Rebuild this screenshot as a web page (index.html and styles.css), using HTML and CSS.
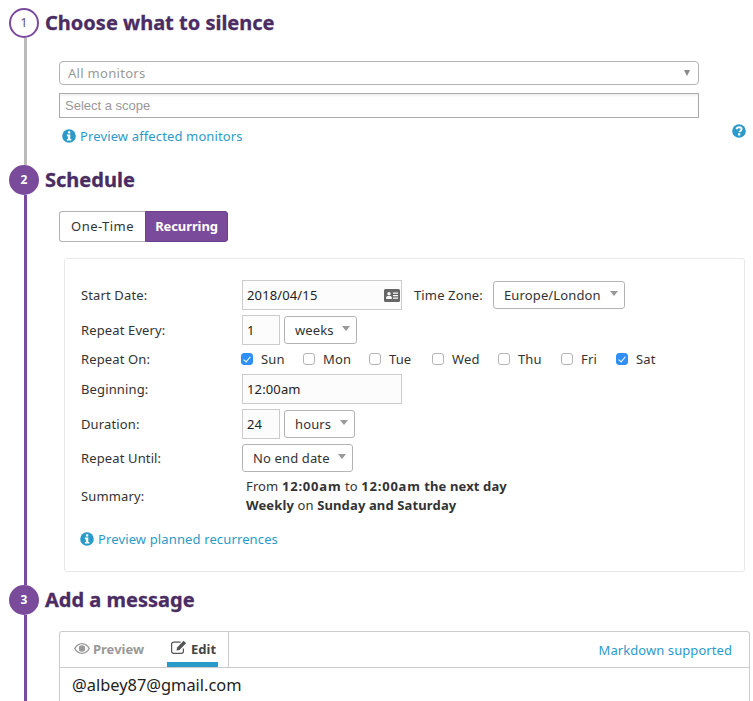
FILE: index.html
```html
<!DOCTYPE html>
<html lang="en">

<head>
    <meta charset="UTF-8">
    <title>Manage Downtime</title>
    <link rel="stylesheet" href="styles.css">
</head>

<body>
    <div class="page">
        <svg width="0" height="0" class="defs">
            <symbol id="i-info" viewBox="0 0 14 14">
                <circle cx="7" cy="7" r="6.8" fill="currentColor"/>
                <rect x="5.9" y="2.3" width="2.4" height="2.2" rx=".4" fill="#fff"/>
                <path d="M4.9 5.6h3.4v4.3h1v1.6H4.9V9.9h1V7.2h-1z" fill="#fff"/>
            </symbol>
            <symbol id="i-help" viewBox="0 0 14 14">
                <circle cx="7" cy="7" r="6.8" fill="currentColor"/>
                <path d="M4.5 5.300C4.800 3.900 5.800 3.200 7.100 3.200c1.400 0 2.500.9 2.500 2.100 0 1.700-2.100 1.800-2.100 3" fill="none" stroke="#fff" stroke-width="1.900"/>
                <rect x="6" y="9.300" width="2.300" height="2.100" rx=".3" fill="#fff"/>
            </symbol>
        </svg>

        <section class="step">
            <div class="rail">
                <span class="dot dot-open">1</span>
                <span class="line line-grey"></span>
            </div>
            <div class="body body-1">
                <h2>Choose what to silence</h2>
                <div class="fields">
                    <div class="monitor-select">All monitors<span class="tiny-arrow"></span></div>
                    <div class="scope-input">Select a scope</div>
                </div>
                <div class="link-row">
                    <a href="#" class="link"><svg class="ico"><use href="#i-info"/></svg>Preview affected monitors</a>
                    <svg class="ico help"><use href="#i-help"/></svg>
                </div>
            </div>
        </section>

        <section class="step">
            <div class="rail">
                <span class="dot">2</span>
                <span class="line"></span>
            </div>
            <div class="body body-2">
                <h2>Schedule</h2>
                <div class="switch">
                    <span class="switch-off">One-Time</span>
                    <span class="switch-on">Recurring</span>
                </div>
                <div class="card">
                    <div class="row">
                        <label>Start Date:</label>
                        <div class="input wide">2018/04/15
                            <svg class="card-ico" viewBox="0 0 16 13"><path fill-rule="evenodd" fill="#666" d="M1.5 0h13A1.5 1.5 0 0 1 16 1.500v10a1.500 1.500 0 0 1-1.500 1.500h-13A1.500 1.500 0 0 1 0 11.500v-10A1.500 1.500 0 0 1 1.500 0zM5 3a1.700 1.700 0 1 0 0 3.400A1.700 1.700 0 0 0 5 3zM2.200 10h5.600V8.600C7.800 7.600 7 7 6 7H4c-1 0-1.800.6-1.800 1.600zM9 3.500v1.300h5V3.500zM9 6v1.300h5V6zM9 8.500v1.300h5V8.500z"/></svg>
                        </div>
                        <span class="tz-label">Time Zone:</span>
                        <div class="select tz">Europe/London</div>
                    </div>
                    <div class="row">
                        <label>Repeat Every:</label>
                        <div class="input small">1</div>
                        <div class="select weeks">weeks</div>
                    </div>
                    <div class="row row-days">
                        <label>Repeat On:</label>
                        <div class="days">
                            <span class="day d-sun"><input type="checkbox" checked>Sun</span>
                            <span class="day d-mon"><input type="checkbox">Mon</span>
                            <span class="day d-tue"><input type="checkbox">Tue</span>
                            <span class="day d-wed"><input type="checkbox">Wed</span>
                            <span class="day d-thu"><input type="checkbox">Thu</span>
                            <span class="day d-fri"><input type="checkbox">Fri</span>
                            <span class="day"><input type="checkbox" checked>Sat</span>
                        </div>
                    </div>
                    <div class="row">
                        <label>Beginning:</label>
                        <div class="input wide">12:00am</div>
                    </div>
                    <div class="row">
                        <label>Duration:</label>
                        <div class="input small">24</div>
                        <div class="select hours">hours</div>
                    </div>
                    <div class="row">
                        <label>Repeat Until:</label>
                        <div class="select until">No end date</div>
                    </div>
                    <div class="row">
                        <label>Summary:</label>
                        <div class="summary">
                            From <b class="time">12:00am</b> to <b><span class="time">12:00am</span> the next day</b><br>
                            <b>Weekly</b> on <b>Sunday and Saturday</b>
                        </div>
                    </div>
                    <a href="#" class="link card-link"><svg class="ico"><use href="#i-info"/></svg>Preview planned recurrences</a>
                </div>
            </div>
        </section>

        <section class="step step-last">
            <div class="rail">
                <span class="dot">3</span>
                <span class="line"></span>
            </div>
            <div class="body body-3">
                <h2>Add a message</h2>
                <div class="editor">
                    <div class="tabs">
                        <span class="tab">
                            <svg class="tab-ico" viewBox="0 0 16 11"><path fill-rule="evenodd" fill="#999" d="M8 0c3.400 0 6.300 2.100 8 5.500C14.300 8.900 11.400 11 8 11S1.700 8.900 0 5.500C1.700 2.100 4.600 0 8 0zm0 1.200c-2.700 0-5 1.700-6.500 4.300C3 8.100 5.300 9.800 8 9.800s5-1.700 6.500-4.300C13 2.900 10.700 1.200 8 1.200zM8 2.300a3.200 3.200 0 1 1 0 6.400 3.200 3.200 0 0 1 0-6.400z"/></svg>Preview
                        </span>
                        <span class="tab tab-active">
                            <svg class="tab-ico edit-ico" viewBox="0 0 16 14"><path fill="none" stroke="#555" stroke-width="1.200" d="M12.400 8.500v2.800a2 2 0 0 1-2 2H2.600a2 2 0 0 1-2-2V4.200a2 2 0 0 1 2-2h7"/><path fill="#555" d="M5.500 10.500l.6-3L12.600.8l2.500 2.500-6.600 6.600z"/></svg>Edit
                        </span>
                        <span class="tabs-fill"><a href="#">Markdown supported</a></span>
                    </div>
                    <div class="message">@albey87@gmail.com</div>
                </div>
            </div>
        </section>
    </div>
</body>

</html>
```

FILE: styles.css
```css
*{
    margin: 0;
    padding: 0;
    box-sizing: border-box;
}
html,body{
    height: 701px;
    overflow: hidden;
}
body{
    background: #fff;
    color: #333;
    font-family: "Noto Sans", "Open Sans", sans-serif;
    font-size: 13px;
    letter-spacing: .13px;
}
a{
    text-decoration: none;
    color: #2a9bc9;
}
.defs{
    display: block;
    height: 0;
}
.page{
    height: 701px;
    padding: 8px 0 0 9px;
    display: flex;
    flex-direction: column;
}
.step{
    display: flex;
}
.step-last{
    flex: 1;
}
.rail{
    width: 30px;
    display: flex;
    flex-direction: column;
    flex-shrink: 0;
}
.dot{
    width: 30px;
    height: 30px;
    border-radius: 50%;
    background: #7b4b9b;
    border: 2px solid #7b4b9b;
    color: #fff;
    font-weight: bold;
    font-size: 12px;
    line-height: 26px;
    text-align: center;
}
.dot-open{
    background: #fff;
    color: #5b4a6b;
    font-weight: normal;
}
.line{
    flex: 1;
    width: 3px;
    margin-left: 15px;
    background: #7b4b9b;
}
.line-grey{
    background: #bbb;
}
.body{
    margin-left: 6px;
    flex: 1;
}
.body-1{
    height: 157px;
}
.body-2{
    height: 420px;
}
h2{
    font-size: 20px;
    line-height: 29px;
    padding-bottom: 1px;
    font-weight: bold;
    letter-spacing: 0;
    color: #4a2c63;
    -webkit-text-stroke: .3px #4a2c63;
}

/* step 1 */
.fields{
    margin: 23px 0 0 14px;
    width: 640px;
    display: flex;
    flex-direction: column;
    gap: 8px;
}
.monitor-select{
    height: 24px;
    line-height: 22px;
    padding-left: 8px;
    border: 1px solid #b4b4b4;
    border-radius: 4px;
    color: #999;
    letter-spacing: .3px;
    display: flex;
    justify-content: space-between;
    align-items: center;
}
.tiny-arrow{
    width: 0;
    height: 0;
    margin-right: 8px;
    border-left: 3px solid transparent;
    border-right: 3px solid transparent;
    border-top: 6px solid #888;
}
.scope-input{
    height: 25px;
    line-height: 23px;
    padding-left: 5px;
    border: 1px solid #aaa;
    box-shadow: inset 0 2px 2px #f2f2f2;
    font-family: "Liberation Sans", sans-serif;
    font-size: 13px;
    letter-spacing: 0;
    color: #999;
}
.link-row{
    margin: 9px 7px 0 14px;
    display: flex;
    justify-content: space-between;
}
.link{
    display: flex;
    align-items: center;
    line-height: 18px;
    padding-left: 3px;
}
.ico{
    width: 14px;
    height: 14px;
    margin-right: 4px;
    color: #2a9bc9;
}
.help{
    margin: -3px 0 0 0;
}

/* step 2 */
.switch{
    display: flex;
    margin: 16px 0 0 14px;
    height: 31px;
    line-height: 29px;
}
.switch-off{
    width: 86px;
    text-align: center;
    letter-spacing: .45px;
    border: 1px solid #b4b4b4;
    border-right: 0;
    border-radius: 3px 0 0 3px;
}
.switch-on{
    width: 83px;
    text-align: center;
    letter-spacing: -.1px;
    background: #7b4b9b;
    border: 1px solid #6c3f8b;
    border-radius: 0 3px 3px 0;
    color: #fff;
    font-weight: bold;
}
.card{
    margin: 16px 0 0 19px;
    width: 681px;
    height: 314px;
    padding: 21px 0 0 15px;
    border: 1px solid #e8e8e8;
    border-radius: 3px;
    display: flex;
    flex-direction: column;
    gap: 5px;
}
.row{
    display: flex;
    align-items: center;
}
.row label{
    width: 162px;
    flex-shrink: 0;
    padding-left: 1px;
}
.input{
    height: 30px;
    line-height: 28px;
    padding-left: 4px;
    border: 1px solid #ccc;
    background: #fcfcfc;
    color: #222;
}
.wide{
    width: 160px;
    display: flex;
    justify-content: space-between;
    align-items: center;
    padding-right: 1px;
}
.small{
    width: 38px;
}
.card-ico{
    width: 16px;
    height: 13px;
}
.select{
    height: 28px;
    line-height: 26px;
    padding-left: 10px;
    margin-left: 4px;
    border: 1px solid #b4b4b4;
    border-radius: 3px;
    background: #fff;
    display: flex;
    align-items: center;
    justify-content: space-between;
}
.select::after{
    content: "";
    width: 0;
    height: 0;
    margin: -3px 6px 0 0;
    border-left: 4px solid transparent;
    border-right: 4px solid transparent;
    border-top: 5px solid #999;
}
.tz-label{
    margin-left: 12px;
    width: 75px;
}
.tz{
    width: 132px;
}
.weeks{
    width: 73px;
}
.hours{
    width: 71px;
}
.until{
    width: 111px;
    margin-left: 0;
}
.row-days{
    height: 19px;
    padding-bottom: 2px;
}
.days{
    display: flex;
    margin-left: -1px;
}
.day{
    display: flex;
    align-items: center;
}
.d-sun{ width: 62px; }
.d-mon{ width: 66px; }
.d-tue{ width: 63px; }
.d-wed{ width: 66px; }
.d-thu{ width: 63px; }
.d-fri{ width: 55px; }
.day input{
    appearance: none;
    width: 12px;
    height: 12px;
    margin-right: 8px;
    border: 1px solid #b5b5b5;
    border-radius: 3px;
    background: #fff;
    position: relative;
}
.day input:checked{
    background: #2f8ff5;
    border-color: #2f8ff5;
}
.day input:checked::after{
    content: "";
    position: absolute;
    left: 3px;
    top: 1px;
    width: 3px;
    height: 6px;
    border: solid #fff;
    border-width: 0 1.5px 1.5px 0;
    transform: rotate(40deg);
}
.summary{
    padding-left: 4px;
    line-height: 19px;
}
.time{
    letter-spacing: .8px;
}
.card-link{
    margin-top: 10px;
    padding-left: 0;
}

/* step 3 */
.editor{
    margin: 16px 3px 0 14px;
    border: 1px solid #ccc;
    border-bottom: 0;
    border-radius: 3px 3px 0 0;
    height: 70px;
}
.tabs{
    display: flex;
    height: 36px;
    border-bottom: 1px solid #ccc;
    font-weight: bold;
    letter-spacing: 0;
    color: #999;
}
.tab{
    display: flex;
    align-items: center;
    padding: 0 0 2px 14px;
    width: 93px;
    height: 35px;
}
.tab-ico{
    width: 16px;
    height: 11px;
    margin-right: 3px;
}
.edit-ico{
    height: 14px;
    margin-top: -3px;
    margin-right: 4px;
}
.tab-active{
    width: 51px;
    margin-left: 14px;
    padding-left: 4px;
    color: #444;
    box-shadow: inset 0 -5px 0 #2a9bc9;
}
.tabs-fill{
    flex: 1;
    margin-left: 10px;
    border-left: 1px solid #ccc;
    text-align: right;
    padding-right: 17px;
    line-height: 37px;
    font-weight: normal;
    letter-spacing: .07px;
}
.message{
    padding: 6px 0 0 12px;
    font-size: 16.4px;
    line-height: 22px;
    letter-spacing: 0;
    color: #222;
}
```
